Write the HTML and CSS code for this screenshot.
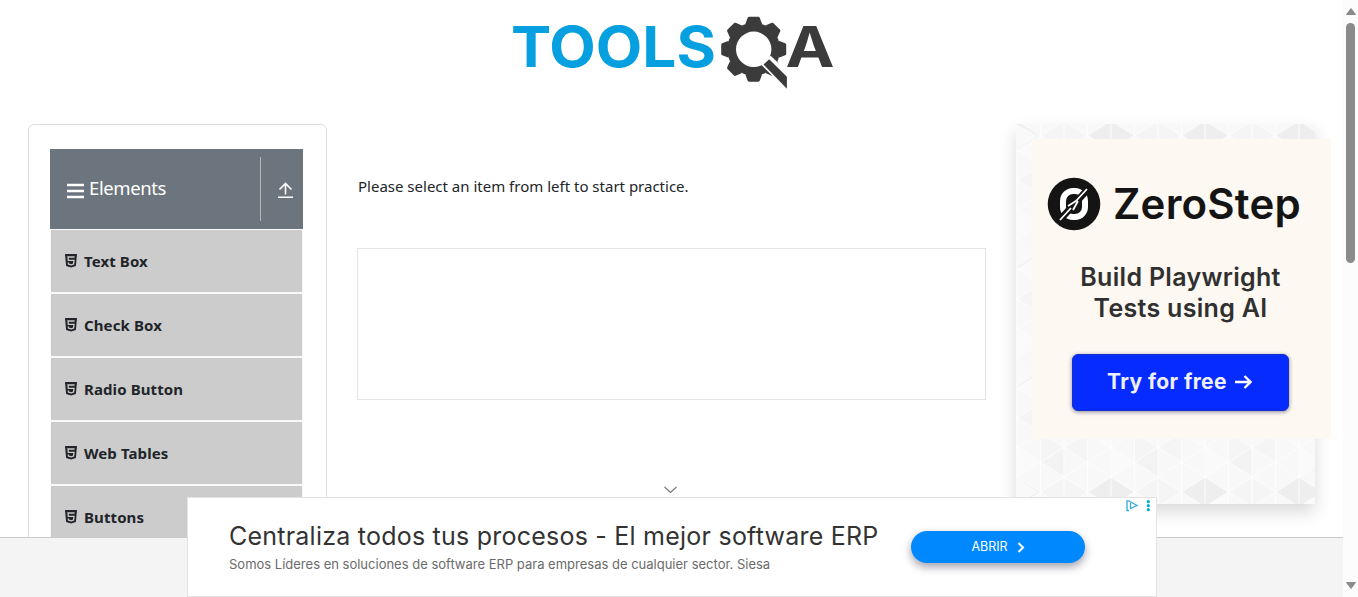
FILE: index.html
```html
<!DOCTYPE html>
<html lang="en">
<head>
<meta charset="utf-8">
<title>ToolsQA</title>
<link rel="stylesheet" href="styles.css">
</head>
<body>
<svg class="defs" aria-hidden="true">
  <symbol id="html5" viewBox="0 0 12 14">
    <path fill="#212529" d="M0 0h12l-1.100 12L6 13.600 1.100 12z"/>
    <path fill="none" stroke="#ccc" stroke-width="1.300" d="M9.600 3H3l.3 3.400H9L8.600 10 6 10.800 3.500 10 3.400 8.500"/>
  </symbol>
</svg>
<div class="window">
  <div class="page">
    <div class="content">
      <header class="header">
        <svg class="logo" width="330" height="90" viewBox="0 0 330 90">
          <text class="logo-tools" x="1" y="51.700" textLength="205" lengthAdjust="spacingAndGlyphs">TOOLS</text>
          <g transform="translate(243.700 34.300)" fill="#3b3b3b">
            <path id="tooth" d="M-8.500 -25L-6 -31.500Q-5.500 -32.500 -4.500 -32.500H4.500Q5.500 -32.500 6 -31.500L8.500 -25z"/>
            <use href="#tooth" transform="rotate(45)"/>
            <use href="#tooth" transform="rotate(90)"/>
            <use href="#tooth" transform="rotate(135)"/>
            <use href="#tooth" transform="rotate(180)"/>
            <use href="#tooth" transform="rotate(225)"/>
            <use href="#tooth" transform="rotate(270)"/>
            <use href="#tooth" transform="rotate(315)"/>
            <circle r="26.500"/>
            <circle r="17.700" fill="#fff"/>
            <path d="M7.500 15.500L17 6.500L38 26.500V44H36z" fill="#fff"/>
            <path d="M9.800 15.200L15.500 10L33.200 27.500V39.500z"/>
          </g>
          <text class="logo-a" x="275.500" y="51.700" textLength="49" lengthAdjust="spacingAndGlyphs">A</text>
        </svg>
      </header>
      <main class="columns">
        <nav class="sidebar">
          <div class="group">
            <svg width="18" height="16" viewBox="0 0 18 16"><path d="M0 2h17M0 8h17M0 14h17" stroke="#fff" stroke-width="2.600"/></svg>
            <span class="group-title">Elements</span>
            <span class="group-toggle"><svg width="16" height="17" viewBox="0 0 16 17" fill="none" stroke="#fff" stroke-width="1.600"><path d="M7.500 12.500V1.500M1.500 7.500l6-6 6 6M0 15.200h15"/></svg></span>
          </div>
          <ul class="menu">
            <li><svg width="12" height="14"><use href="#html5"/></svg>Text Box</li>
            <li><svg width="12" height="14"><use href="#html5"/></svg>Check Box</li>
            <li><svg width="12" height="14"><use href="#html5"/></svg>Radio Button</li>
            <li><svg width="12" height="14"><use href="#html5"/></svg>Web Tables</li>
            <li><svg width="12" height="14"><use href="#html5"/></svg>Buttons</li>
          </ul>
        </nav>
        <section class="middle">
          <p class="hint">Please select an item from left to start practice.</p>
          <div class="slot"></div>
        </section>
        <aside class="promo">
          <svg class="promo-pattern" width="299" height="380">
            <defs>
              <pattern id="tri" x="1" y="-3.300" width="94" height="118.800" patternUnits="userSpaceOnUse">
                <rect width="94" height="118.800" fill="#f8f8f8"/>
                <path fill="#eee" d="M70.500 14.850L94 0V29.700z M0 0L23.500 14.850 0 29.700z"/>
                <path fill="#f5f5f5" d="M23.500 14.850L47 0V29.700z M47 0L70.500 14.850 47 29.700z M0 59.400L23.500 44.550V74.250z M47 89.100L70.500 74.250V103.950z M70.500 44.550L94 59.400 70.500 74.250z M23.500 74.250L47 89.100 23.500 103.950z"/>
                <path fill="#f3f3f3" d="M23.500 103.950L47 89.100V118.800z M47 59.400L70.500 44.550V74.250z"/>
                <path fill="#fafafa" d="M0 29.700L23.500 14.850V44.550z M47 29.700L70.500 44.550 47 59.400z M70.500 74.250L94 59.400V89.100z M0 89.100L23.500 103.950 0 118.800z"/>
                <path stroke="#fdfdfd" stroke-width="1" fill="none" d="M0 0V118.800M23.500 0V118.800M47 0V118.800M70.500 0V118.800M94 0V118.800M0 0L94 59.400 0 118.800M94 0L0 59.400 94 118.800M47 0L94 29.700 0 89.100 47 118.800M47 0L0 29.700 94 89.100 47 118.800"/>
              </pattern>
            </defs>
            <rect width="299" height="380" fill="url(#tri)"/>
            <path fill="#f9f9f9" d="M0 0L22 11.500 0 26z M0 115L22 130 0 144z M0 234L22 249 0 263z M0 353L22 368 0 380z"/>
          </svg>
          <div class="zerostep">
            <div class="brand">
              <svg width="54" height="54" viewBox="0 0 54 54">
                <circle cx="27" cy="27" r="26.300" fill="#141414"/>
                <rect x="16" y="14" width="22" height="26" rx="10" fill="none" stroke="#fff" stroke-width="6"/>
                <path d="M11 45L42 11" stroke="#141414" stroke-width="7"/>
                <path d="M13 43L24 31M21 29L29 24M26 33L31 24M29 24L40 12" stroke="#fff" stroke-width="1.800" fill="none"/>
              </svg>
              <span class="brand-name">ZeroStep</span>
            </div>
            <p class="tagline">Build Playwright<br>Tests using AI</p>
            <div class="try">Try for free <svg width="17" height="14" viewBox="0 0 17 14" fill="none" stroke="#fff" stroke-width="2.300"><path d="M0 7h15M9.500 1l6 6-6 6"/></svg></div>
          </div>
        </aside>
      </main>
    </div>
    <footer class="footer"></footer>
    <svg class="collapse" width="14" height="8" viewBox="0 0 14 8"><path d="M.5 1L6.500 6.500 12.500 1" fill="none" stroke="#777" stroke-width="1.200"/></svg>
    <div class="ad">
      <div class="ad-copy">
        <div class="ad-title">Centraliza todos tus procesos - El mejor software ERP</div>
        <div class="ad-sub">Somos Líderes en soluciones de software ERP para empresas de cualquier sector. Siesa</div>
      </div>
      <div class="ad-button">ABRIR <svg width="8" height="11" viewBox="0 0 8 11"><path d="M1.500 1l4.500 4.500L1.500 10" fill="none" stroke="#fff" stroke-width="2"/></svg></div>
      <svg class="ad-mark" width="26" height="12" viewBox="0 0 26 12"><path d="M3 10.500H1V.8h1.500L11 5.500 4.500 8.500V3" fill="none" stroke="#35a7dc" stroke-width="1.300"/><g fill="#00aecd"><circle cx="22.300" cy="1.700" r="1.600"/><circle cx="22.300" cy="5.700" r="1.600"/><circle cx="22.300" cy="9.700" r="1.600"/></g></svg>
    </div>
  </div>
  <div class="scrollbar">
    <svg width="10" height="7" viewBox="0 0 10 7"><path d="M5 .5L9.500 6.500H.5z" fill="#8b8b8b" stroke="#8b8b8b" stroke-linejoin="round"/></svg>
    <div class="thumb"></div>
    <svg width="10" height="7" viewBox="0 0 10 7"><path d="M5 6.500L9.500 .5H.5z" fill="#8b8b8b" stroke="#8b8b8b" stroke-linejoin="round"/></svg>
  </div>
</div>
</body>
</html>
```
FILE: styles.css
```css
* { box-sizing: border-box; }
body { margin: 0; overflow: hidden; font: 16px/24px "Noto Sans", "Open Sans", sans-serif; color: #212529; background: #fff; }
svg { display: block; flex: none; }
.defs { display: none; }
.window { display: flex; width: 1358px; height: 597px; }
.page { position: relative; width: 1343px; display: flex; flex-direction: column; }
.content { height: 537px; overflow: hidden; }
.header { height: 124px; padding: 15px 0 0 510px; }
.logo { overflow: visible; }
.logo-tools, .logo-a { font-family: Inter, sans-serif; font-weight: 700; font-size: 56px; }
.logo-tools { fill: #069fdf; }
.logo-a { fill: #3b3b3b; }
.columns { display: grid; grid-template-columns: 299px 629px 299px; column-gap: 30px; padding-left: 28px; align-items: start; }
.sidebar { height: 500px; border: 1px solid #dedede; border-radius: 6px; padding: 24px 23px 0 21px; }
.group { display: flex; align-items: center; height: 80px; padding-left: 17px; background: #6c757d; color: #fff; }
.group svg { margin-top: 3px; }
.group-title { font-size: 18.500px; margin: -2px 0 0 4px; letter-spacing: -.4px; }
.group-toggle { margin-left: auto; width: 43px; height: 64px; border-left: 1px solid #b5b5b5; display: flex; align-items: center; padding-left: 17px; }
.menu { list-style: none; margin: 0; padding: 1px; background: #f8f9fa; display: flex; flex-direction: column; gap: 2px; }
.menu li { display: flex; align-items: center; gap: 7px; height: 62px; padding-left: 14px; background: #ccc; font-weight: 700; font-size: 15px; letter-spacing: .1px; }
.middle { padding-top: 50px; }
.hint { margin: 0; padding-left: 1px; font-size: 15px; }
.slot { margin-top: 50px; height: 152px; border: 1px solid #e4e4e4; }
.promo { width: 299px; height: 380px; display: grid; box-shadow: 0 8px 16px rgba(0,0,0,.15); }
.promo-pattern, .zerostep { grid-area: 1 / 1; }
.zerostep { width: 299px; height: 300px; margin: 15px 0 0 16px; background: #fdf8f2; font-family: Inter, sans-serif; display: flex; flex-direction: column; align-items: center; z-index: 1; }
.brand { display: flex; align-items: center; gap: 12px; height: 54px; margin: 38px 0 0; align-self: stretch; padding-left: 15px; color: #141414; }
.brand-name { font-size: 42px; font-weight: 600; letter-spacing: .2px; white-space: nowrap; }
.tagline { margin: 31px 2px 0 0; font-size: 25px; line-height: 31px; font-weight: 600; letter-spacing: .3px; text-align: center; color: #303030; }
.try { display: flex; align-items: center; justify-content: center; gap: 8px; width: 217px; height: 57px; margin: 30px 2px 0 0; background: #062bff; border: 1px solid #1430c8; border-radius: 6px; color: #eef0ff; font-weight: 700; font-size: 21px; letter-spacing: .4px; box-shadow: 0 1px 4px rgba(40,40,80,.55); padding: 0 2px 2px 0; }
.footer { flex: 1; background: #f4f4f4; border-top: 1px solid #c8cbcb; }
.collapse { position: absolute; left: 664px; top: 486px; }
.ad { position: absolute; left: 187px; top: 497px; width: 970px; height: 100px; background: #fff; border: 1px solid #e3e3e3; display: flex; font-family: Inter, sans-serif; }
.ad-copy { width: 682px; padding: 22px 0 0 41px; white-space: nowrap; }
.ad-title { font-size: 25px; line-height: 32px; letter-spacing: .23px; color: #333; }
.ad-sub { font-size: 13px; line-height: 24px; color: #6b6b6b; }
.ad-button { display: flex; align-items: center; justify-content: center; gap: 9px; margin: 33px 0 0 41px; width: 174px; height: 32px; border-radius: 16px; background: #0088ff; color: #fff; font-size: 12.500px; box-shadow: 0 4px 9px rgba(20,20,50,.4); }
.ad-mark { margin: 2px 0 0 41px; }
.scrollbar { width: 15px; background: #fcfcfc; display: flex; flex-direction: column; align-items: center; padding: 8px 0; }
.thumb { width: 9px; height: 240px; border-radius: 5px; background: #8b8b8b; margin: 8px 0 auto; }
```
